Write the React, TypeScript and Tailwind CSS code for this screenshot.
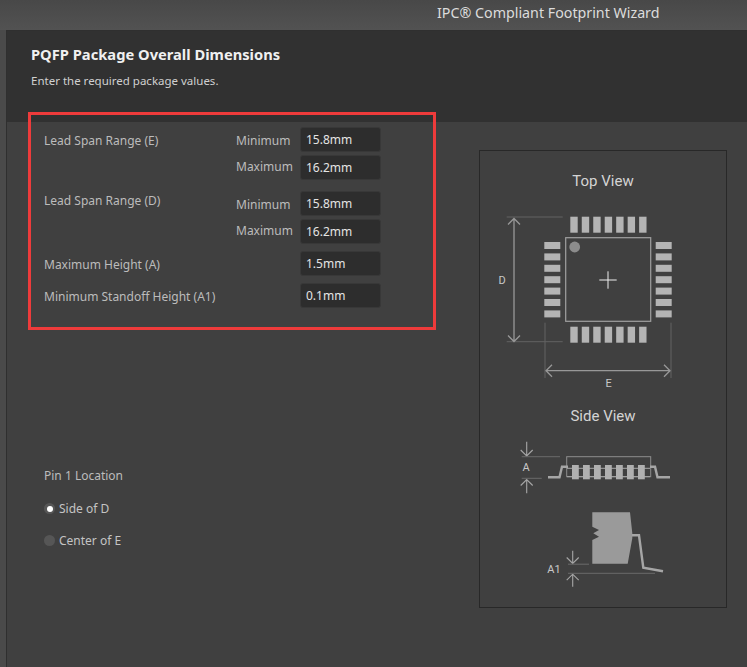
const inputCls =
  "flex h-[25px] w-[81px] items-center rounded-[3px] border border-[#383838] bg-[#2d2d2d] pl-[5px] text-[12px] leading-none text-[#e4e4e4]";

function ValueBox({ value }: { value: string }) {
  return <div className={inputCls}>{value}</div>;
}

function SpanGroup({ label, labelTop, minTop, maxTop }: { label: string; labelTop: string; minTop: string; maxTop: string }) {
  return (
    <div className="flex">
      <div className={`w-[192px] ${labelTop}`}>{label}</div>
      <div className="flex w-[64px] flex-col">
        <div className={`h-[25px] leading-[25px] ${minTop}`}>Minimum</div>
        <div className={`h-[25px] leading-[25px] ${maxTop}`}>Maximum</div>
      </div>
      <div className="flex flex-col gap-[3px]">
        <ValueBox value="15.8mm" />
        <ValueBox value="16.2mm" />
      </div>
    </div>
  );
}

function Radio({ checked, label }: { checked?: boolean; label: string }) {
  return (
    <div className="flex h-[20px] items-center">
      <div className="flex h-[11px] w-[11px] items-center justify-center rounded-full bg-[#565656] ml-[0px] -mt-[1px]">
        {checked && <div className="h-[6px] w-[6px] rounded-full bg-white" />}
      </div>
      <span className="ml-[4px] text-[#c4c4c4]">{label}</span>
    </div>
  );
}

function TopViewDrawing() {
  const steps = [0, 1, 2, 3, 4, 5, 6];
  return (
    <svg viewBox="480 210 246 182" className="mt-[19px] block h-[182px] w-[246px]">
      <g fill="#b4b4b4">
        {steps.map((i) => (
          <g key={i}>
            <rect x={570.3 + i * 11.47} y="216.7" width="7.4" height="16" />
            <rect x={570.3 + i * 11.47} y="326.7" width="7.4" height="16" />
            <rect x="544.3" y={242 + i * 11.4} width="16" height="7" />
            <rect x="655.7" y={242 + i * 11.4} width="16" height="7" />
          </g>
        ))}
      </g>
      <rect x="565.7" y="237.7" width="85" height="83.6" fill="none" stroke="#a0a0a0" strokeWidth="1.2" />
      <circle cx="574.7" cy="247" r="5.4" fill="#8c8c8c" />
      <path d="M599.3 280H616.7M608 271.3V288.7" stroke="#eeeeee" strokeWidth="1" fill="none" />
      <path d="M506.7 217H562.7M506.7 341.7H562.7M545 322.7V378M671 322.7V378" stroke="#626262" strokeWidth="1" fill="none" />
      <path
        d="M514 218.5V341.5M508 224.5L514 218.5L520 224.5M508 335.5L514 341.5L520 335.5M546 370.7H670M552 364.7L546 370.7L552 376.7M664 364.7L670 370.7L664 376.7"
        stroke="#989898"
        strokeWidth="1.3"
        fill="none"
      />
      <text x="502" y="283.5" textAnchor="middle" fontSize="11" fill="#c8c8c8" fontFamily="Roboto, sans-serif">D</text>
      <text x="608.7" y="387" textAnchor="middle" fontSize="11" fill="#c8c8c8" fontFamily="Roboto, sans-serif">E</text>
    </svg>
  );
}

function SideViewDrawing() {
  const steps = [0, 1, 2, 3, 4, 5, 6];
  return (
    <svg viewBox="480 430 246 164" className="mt-[4px] block h-[164px] w-[246px]">
      {/* package outline with leads */}
      <rect x="566.7" y="456.7" width="84" height="20" fill="none" stroke="#8e8e8e" strokeWidth="1" />
      <path d="M567 468.3H650M567 476.7H650" stroke="#a8a8a8" strokeWidth="1" fill="none" />
      <g fill="#b0b0b0">
        {steps.map((i) => (
          <rect key={i} x={572 + i * 11} y="465" width="6.8" height="14.3" />
        ))}
      </g>
      <path d="M548 477.3H559.5L562 466.7H568M650 466.7H655L657.5 477.3H670" stroke="#a6a6a6" strokeWidth="2.4" fill="none" />
      <path
        d="M526.7 441.7V456M520.7 450L526.7 456L532.7 450M526.7 479.5V493.3M520.7 485.5L526.7 479.5L532.7 485.5"
        stroke="#a6a6a6"
        strokeWidth="1.1"
        fill="none"
      />
      <path d="M521.7 456.7H560M521.7 478.3H541.7" stroke="#6a6a6a" strokeWidth="1" fill="none" />
      <text x="526" y="471" textAnchor="middle" fontSize="11" fill="#c8c8c8" fontFamily="Roboto, sans-serif">A</text>

      {/* lead detail */}
      <polygon
        points="592.3,512.3 630,512.3 632.3,533.3 632.3,538.3 627.7,563.7 592.3,563.7 592.3,540 599,536.7 593.3,533.3 599,530 592.3,526.7"
        fill="#9a9a9a"
      />
      <path d="M632 535.3H639L643.3 567.7L663 571.3" stroke="#a6a6a6" strokeWidth="2.4" fill="none" />
      <path
        d="M572.7 550.7V563.5M566.7 557.5L572.7 563.5L578.7 557.5M572.7 574.2V586.7M566.7 580.2L572.7 574.2L578.7 580.2"
        stroke="#a6a6a6"
        strokeWidth="1.1"
        fill="none"
      />
      <path d="M568 564.2H589M568 573.3H655" stroke="#6a6a6a" strokeWidth="1" fill="none" />
      <text x="554" y="573" textAnchor="middle" fontSize="11" fill="#c8c8c8" fontFamily="Roboto, sans-serif">A1</text>
    </svg>
  );
}

export default function App() {
  return (
    <div className="relative h-[667px] w-[747px] overflow-hidden bg-[#4a4a4a] font-['Noto_Sans',sans-serif] text-[12px] text-[#bcbcbc]">
      {/* Title bar */}
      <div className="h-[30px] bg-gradient-to-b from-[#484848] to-[#525252] pl-[437px] pt-[3px] text-[14.25px] leading-[20px] text-[#dcdcdc]">
        IPC® Compliant Footprint Wizard
      </div>

      <div className="ml-[6px] h-[637px] border-t border-l border-[#2f2f2f] bg-[#404040]">
        {/* Header */}
        <div className="h-[91px] bg-[#313131] pl-[24px] pt-[13px]">
          <h1 className="text-[14.7px] leading-[20px] font-bold text-[#f0f0f0]">PQFP Package Overall Dimensions</h1>
          <p className="mt-[9px] text-[11.5px] leading-[16px] text-[#d0d0d0]">Enter the required package values.</p>
        </div>

        <div className="flex">
          {/* Form column */}
          <div className="w-[472px] pl-[37px] pt-[5px] leading-[18px]">
            <SpanGroup label="Lead Span Range (E)" labelTop="pt-[5px]" minTop="mt-[1px]" maxTop="mt-[1px]" />
            <div className="mt-[11px]">
              <SpanGroup label="Lead Span Range (D)" labelTop="mt-[1px]" minTop="mt-[1px]" maxTop="mt-[1px]" />
            </div>
            <div className="mt-[7px] flex items-center">
              <div className="w-[256px] pt-[3px]">Maximum Height (A)</div>
              <ValueBox value="1.5mm" />
            </div>
            <div className="mt-[7px] flex items-center">
              <div className="w-[256px] pt-[3px]">Minimum Standoff Height (A1)</div>
              <ValueBox value="0.1mm" />
            </div>

            <div className="mt-[159px]">Pin 1 Location</div>
            <div className="mt-[14px] flex flex-col gap-[12px]">
              <Radio checked label="Side of D" />
              <Radio label="Center of E" />
            </div>
          </div>

          {/* Diagram panel */}
          <div className="mt-[28px] flex h-[458px] w-[248px] flex-col items-center border border-[#282828]">
            <div className="mt-[20px] h-[20px] font-['Roboto',sans-serif] text-[15px] leading-[20px] text-[#d4d4d4]">Top View</div>
            <TopViewDrawing />
            <div className="mt-[14px] h-[20px] font-['Roboto',sans-serif] text-[15px] leading-[20px] text-[#d4d4d4]">Side View</div>
            <SideViewDrawing />
          </div>
        </div>
      </div>

      {/* Red annotation frame */}
      <div className="absolute left-[28px] top-[112px] h-[218px] w-[408px] border-[3px] border-[#ee3b3b]" />
    </div>
  );
}
